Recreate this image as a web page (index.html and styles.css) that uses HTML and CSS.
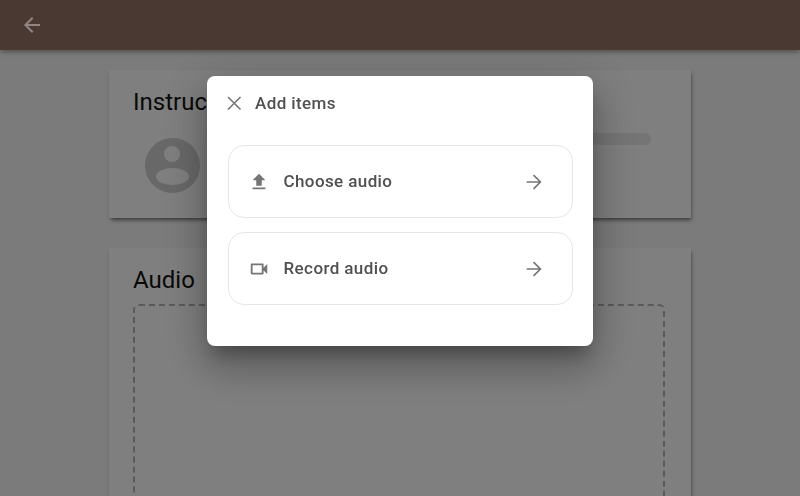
FILE: index.html
```html
<!DOCTYPE html>
<html lang="en">
<head>
<meta charset="utf-8">
<title>Add items</title>
<link rel="stylesheet" href="styles.css">
</head>
<body>
<header class="toolbar">
  <svg class="back" viewBox="0 0 24 24"><path d="M20 11H7.830l5.590-5.590L12 4l-8 8 8 8 1.410-1.410L7.830 13H20v-2z"/></svg>
</header>
<main class="page">
  <section class="card card-instructions">
    <h2 class="card-title">Instructions</h2>
    <div class="instruction-row">
      <svg class="avatar" viewBox="0 0 55 55"><path d="M27.500 0a27.500 27.500 0 1 0 0 55a27.500 27.500 0 1 0 0-55zM27 8a8 8 0 1 1 0 16a8 8 0 1 1 0-16zM27.500 30a16.500 8.500 0 1 1 0 17a16.500 8.500 0 1 1 0-17z" fill-rule="evenodd"/></svg>
      <div class="placeholder-bar"></div>
    </div>
  </section>
  <section class="card card-audio">
    <h2 class="card-title">Audio</h2>
    <div class="dropzone"></div>
  </section>
</main>
<div class="overlay">
  <div class="modal">
    <div class="modal-head">
      <svg class="close" viewBox="0 0 24 24"><path d="M6 6l12.500 12.500M18.500 6L6 18.500"/></svg>
      <span class="modal-title">Add items</span>
    </div>
    <div class="option">
      <svg class="option-icon" viewBox="0 0 24 24"><path d="M9 16h6v-6h4l-7-7-7 7h4zm-4 2h14v2H5z"/></svg>
      <span class="option-label">Choose audio</span>
      <svg class="option-arrow" viewBox="0 0 24 24"><path d="M4 12h15M11.500 4.500L19 12l-7.500 7.500"/></svg>
    </div>
    <div class="option">
      <svg class="option-icon" viewBox="0 0 24 24"><path d="M17 10.500V7c0-.55-.45-1-1-1H4c-.55 0-1 .45-1 1v10c0 .55.45 1 1 1h12c.55 0 1-.45 1-1v-3.500l4 4v-11l-4 4zM15 16H5V8h10v8z"/></svg>
      <span class="option-label">Record audio</span>
      <svg class="option-arrow" viewBox="0 0 24 24"><path d="M4 12h15M11.500 4.500L19 12l-7.500 7.500"/></svg>
    </div>
  </div>
</div>
</body>
</html>
```
FILE: styles.css
```css
* { box-sizing: border-box; }
html, body { margin: 0; height: 496px; overflow: hidden; }
body { background: #f6f6f6; font-family: Roboto, "Liberation Sans", sans-serif; }

.toolbar {
  position: relative;
  z-index: 3;
  height: 50px;
  background: #4a3933;
  display: flex;
  align-items: center;
  padding-left: 20px;
  box-shadow: 0 2px 5px rgba(0, 0, 0, .35);
}
.back { width: 24px; height: 24px; fill: #918683; }

.page { display: flex; flex-direction: column; align-items: center; gap: 30px; padding-top: 20px; }
.card { width: 582px; background: #fff; padding: 16px 24px 0; box-shadow: 1px 3px 4px -1px rgba(0, 0, 0, .55); }
.card-instructions { height: 148px; }
.card-audio { height: 300px; overflow: hidden; }
.card-title { margin: 0; font-size: 24px; font-weight: 400; line-height: 32px; color: #111; }

.instruction-row { position: relative; margin: 20px 0 0 12px; }
.avatar { display: block; width: 55px; height: 55px; fill: #d0d0d0; }
.placeholder-bar { position: absolute; right: 16px; top: -5px; width: 200px; height: 12px; border-radius: 6px; background: #eaeaea; }

.dropzone { margin: 8px 2px 0 0; height: 300px; border: 2px dashed #b4b4b4; border-radius: 6px; }

.overlay {
  position: fixed;
  inset: 0;
  z-index: 2;
  background: rgba(0, 0, 0, .5);
  display: flex;
  justify-content: center;
  align-items: flex-start;
  padding-top: 76px;
}
.modal {
  width: 386px;
  height: 270px;
  background: #fff;
  border-radius: 8px;
  padding: 0 20.500px;
  box-shadow: 0 12px 18px -6px rgba(0, 0, 0, .3), 0 24px 38px 3px rgba(0, 0, 0, .17), 0 9px 46px 8px rgba(0, 0, 0, .14);
}
.modal-head { display: flex; align-items: center; height: 69px; padding-bottom: 15px; gap: 9px; margin-left: -5.500px; }
.close { width: 24px; height: 24px; fill: none; stroke: #757575; stroke-width: 1.600; flex: none; }
.modal-title { font-size: 17px; font-weight: 500; letter-spacing: .4px; color: #505050; padding-bottom: 1px; }

.option {
  display: flex;
  align-items: center;
  height: 73px;
  margin-bottom: 14px;
  padding: 0 26.500px 0 19.500px;
  border: 1px solid #e6e6e6;
  border-radius: 16px;
}
.option-icon { width: 22px; height: 22px; fill: #757575; flex: none; }
.option-label { flex: 1; margin-left: 13.500px; padding-bottom: 2px; font-size: 17px; font-weight: 500; letter-spacing: .4px; color: #505050; }
.option-arrow { width: 22px; height: 22px; fill: none; stroke: #757575; stroke-width: 1.800; flex: none; }
```
